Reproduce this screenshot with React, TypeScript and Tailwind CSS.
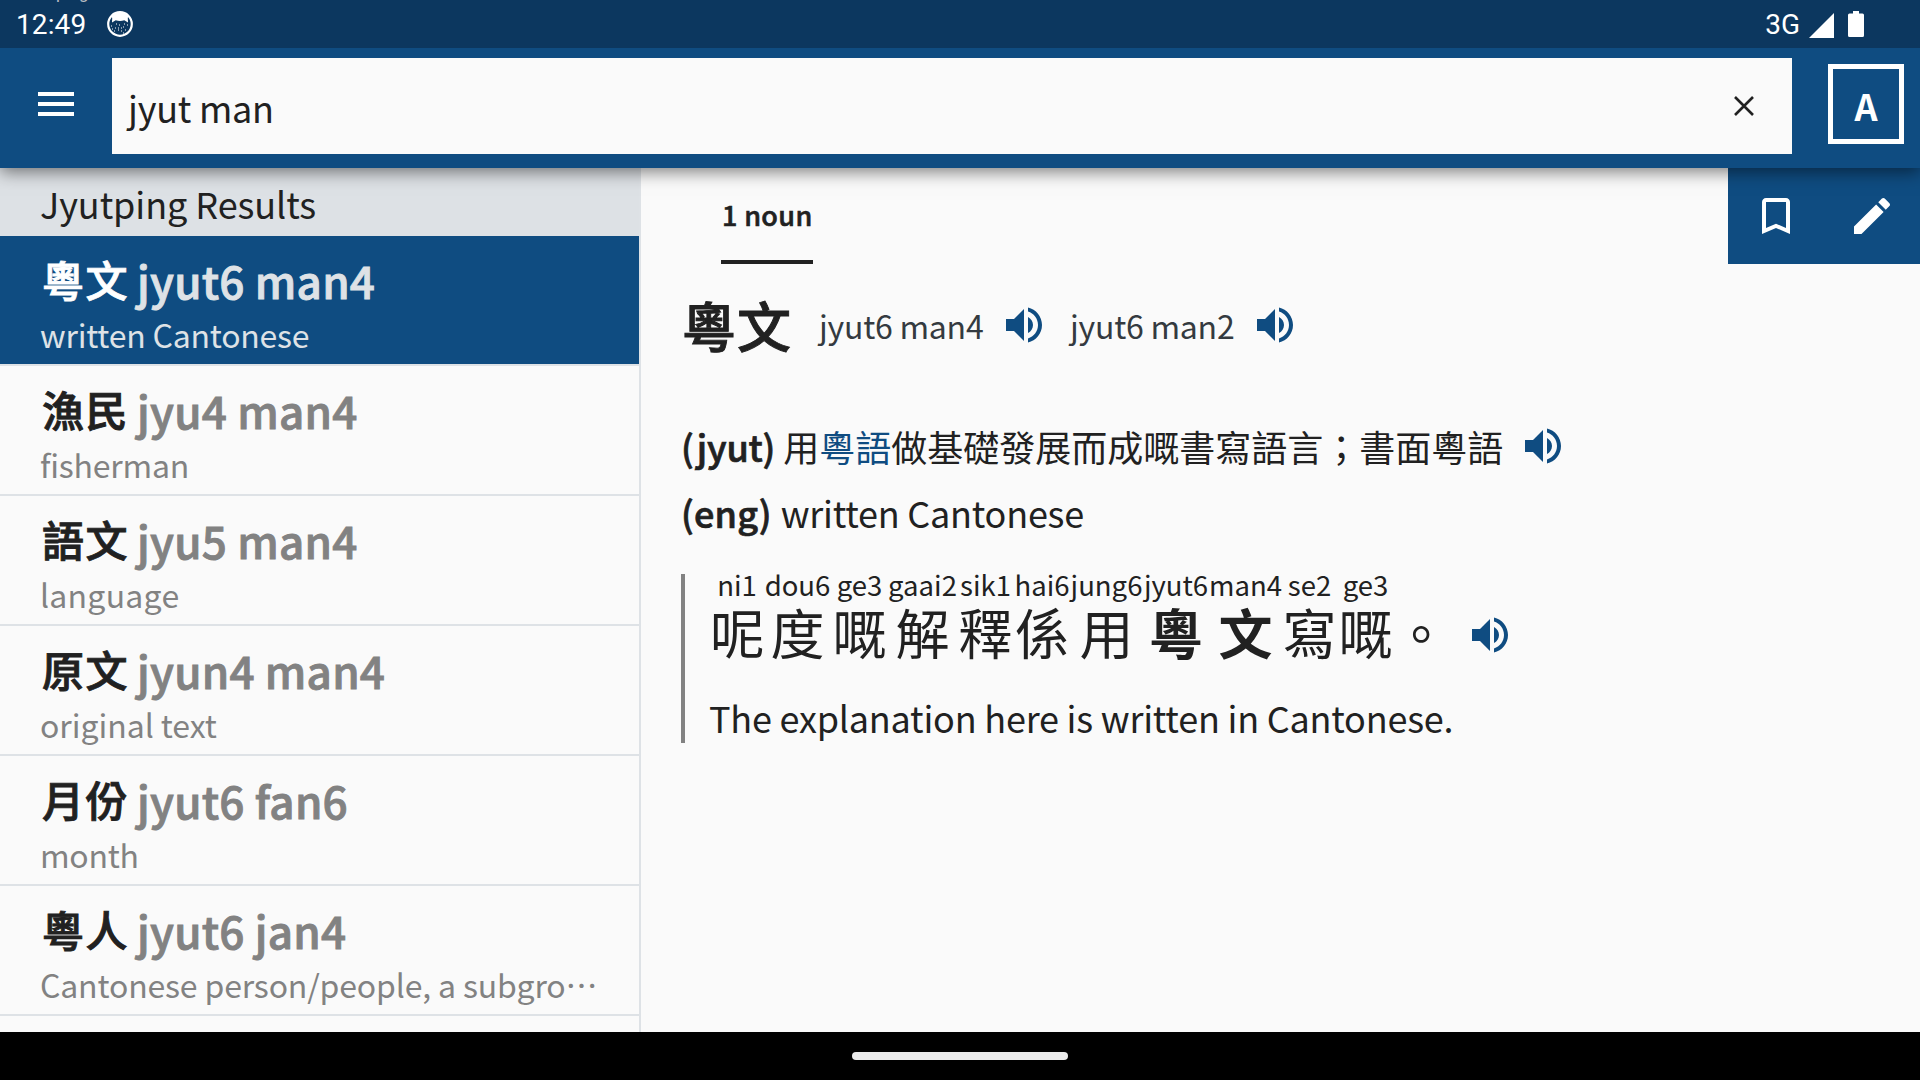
import React from "react";

const results = [
  { word: "粵文", jyutping: "jyut6 man4", meaning: "written Cantonese", tracking: "tracking-[-0.22px]", selected: true },
  { word: "漁民", jyutping: "jyu4 man4", meaning: "fisherman", tracking: "tracking-[-0.2px]" },
  { word: "語文", jyutping: "jyu5 man4", meaning: "language", tracking: "tracking-[0.25px]" },
  { word: "原文", jyutping: "jyun4 man4", meaning: "original text", tracking: "tracking-[-0.05px]" },
  { word: "月份", jyutping: "jyut6 fan6", meaning: "month", tracking: "tracking-[-0.3px]" },
  { word: "粵人", jyutping: "jyut6 jan4", meaning: "Cantonese person/people, a subgro⋯", tracking: "tracking-[-0.16px]" },
];

const ruby = [
  { base: "呢", reading: "ni1", width: "w-[54px]" },
  { base: "度", reading: "dou6", width: "w-[67px]" },
  { base: "嘅", reading: "ge3", width: "w-[57px]" },
  { base: "解", reading: "gaai2", width: "w-[69px]" },
  { base: "釋", reading: "sik1", width: "w-[57px]" },
  { base: "係", reading: "hai6", width: "w-[56px]" },
  { base: "用", reading: "jung6", width: "w-[73px]" },
  { base: "粵", reading: "jyut6", width: "w-[66px]", bold: true },
  { base: "文", reading: "man4", width: "w-[73px]", bold: true },
  { base: "寫", reading: "se2", width: "w-[55px]" },
  { base: "嘅", reading: "ge3", width: "w-[57px]" },
  { base: "。", reading: "", width: "w-[54px]" },
];

function Speaker({ className = "" }: { className?: string }) {
  return (
    <svg viewBox="0 0 24 24" className={`size-12 shrink-0 fill-[#0f4c81] ${className}`}>
      <path d="M3 9v6h4l5 5V4L7 9H3zm13.5 3c0-1.77-1.02-3.29-2.5-4.03v8.05c1.48-.73 2.5-2.25 2.5-4.02zM14 3.23v2.06c2.89.86 5 3.54 5 6.71s-2.11 5.85-5 6.71v2.06c4.01-.91 7-4.49 7-8.77s-2.99-7.86-7-8.77z" />
    </svg>
  );
}

function StatusBar() {
  return (
    <div className="relative z-20 flex h-12 shrink-0 items-center bg-[#0c375f] pt-[2px] pr-14 pl-4 font-['Roboto',sans-serif] text-[28px] text-white">
      <span className="absolute -top-[15px] left-14 text-[17px] leading-4 text-[#b9bec4]">ping</span>
      <span className="w-[91px] tracking-[0.1px]">12:49</span>
      <svg viewBox="0 0 26 26" className="-mt-[2px] size-[26px]">
        <circle cx="13" cy="13" r="11.8" fill="none" stroke="#fff" strokeWidth="2.2" />
        <path d="M4.500 4Q13-2 21.500 4L20.800 7L21 11.500L17.300 9.300Q13 10.500 8.700 9.300L5 11.500L5.200 7Z" fill="#fff" />
        <path
          d="M4 15h1M8 17h1M12 14h1M16 16h1M20 14h1M11 19h1M14 20h1M7 20h1M18 19h1M9 13h1M14 17h1M17 13h1M11 17h1M5 18h1M16 22h1"
          stroke="#fff"
          strokeWidth="1"
        />
      </svg>
      <span className="ml-auto">3G</span>
      <svg viewBox="0 0 25 25" className="ml-[9px] size-[25px] fill-white">
        <path d="M0 25L25 0V25Z" />
      </svg>
      <svg viewBox="0 0 16 26" className="-mt-[2px] ml-[14px] h-[26px] w-4 fill-white">
        <path d="M5 0h6v2.500h3.500A1.500 1.500 0 0 1 16 4v20.500a1.500 1.500 0 0 1-1.500 1.500h-13A1.500 1.500 0 0 1 0 24.500V4a1.500 1.500 0 0 1 1.500-1.500H5z" />
      </svg>
    </div>
  );
}

function SearchBar() {
  return (
    <header className="relative z-10 flex h-[120px] shrink-0 bg-[#0f4c81] pt-[10px] pr-4 shadow-[0_4px_16px_rgba(0,0,0,0.5)]">
      <button className="flex h-[92px] w-28 items-center justify-center">
        <span className="flex w-9 flex-col gap-[6px]">
          <span className="h-1 bg-white" />
          <span className="h-1 bg-white" />
          <span className="h-1 bg-white" />
        </span>
      </button>
      <div className="flex h-24 w-[1680px] items-center justify-between bg-[#fafafa] pr-[38px] pl-4">
        <span className="pt-px text-[36px] leading-[52px] tracking-[-0.24px] text-[#212121]">jyut man</span>
        <svg viewBox="0 0 20 20" className="size-5 stroke-[#212121]" fill="none" strokeWidth="2.6">
          <path d="M1 1L19 19M19 1L1 19" />
        </svg>
      </div>
      <button className="mt-[6px] ml-9 flex h-20 w-[76px] items-center justify-center border-[5px] border-white pt-[2px] text-[36px] leading-none font-bold text-white">
        A
      </button>
    </header>
  );
}

function ResultList() {
  return (
    <aside className="w-[641px] shrink-0 overflow-hidden border-r-2 border-[#dee2e6]">
      <h2 className="flex h-[68px] items-center bg-[#dde1e5] pt-[2px] pl-10 text-[36px] leading-[52px] tracking-[-0.08px] text-[#212121]">
        Jyutping Results
      </h2>
      {results.map((r) => (
        <div
          key={r.word}
          className={`h-[130px] border-b-2 border-[#dee2e6] pt-3 pl-10 ${r.selected ? "bg-[#0f4c81]" : ""}`}
        >
          <div
            className={`flex h-[64px] pl-[2px] text-[44px] leading-[64px] font-medium [-webkit-text-stroke-width:0.9px] ${r.selected ? "text-white" : "text-[#212121]"}`}
          >
            <span className="w-[88px] text-[42px] leading-[62px] tracking-[1.6px] whitespace-nowrap">{r.word}</span>
            <span className={`ml-[7px] tracking-[0.25px] ${r.selected ? "text-[#dee2e6]" : "text-[#828282]"}`}>
              {r.jyutping}
            </span>
          </div>
          <div
            className={`-mt-px text-[32px] leading-[46px] whitespace-nowrap ${r.tracking} ${r.selected ? "text-[#dee2e6]" : "text-[#828282]"}`}
          >
            {r.meaning}
          </div>
        </div>
      ))}
    </aside>
  );
}

function Entry() {
  return (
    <main className="flex grow flex-col text-[#212121]">
      <div className="flex h-24 items-start justify-between">
        <div className="ml-20 flex h-24 w-[92px] flex-col border-b-4 border-[#212121] pt-[27px]">
          <span className="pl-px text-[27px] leading-10 font-medium tracking-[0.35px] whitespace-nowrap [-webkit-text-stroke-width:0.6px]">
            1 noun
          </span>
        </div>
        <div className="flex h-24 w-48 items-center bg-[#0f4c81]">
          <svg viewBox="0 0 24 24" className="ml-6 size-12 fill-white">
            <path d="M17 3H7c-1.100 0-1.990.9-1.990 2L5 21l7-3 7 3V5c0-1.100-.9-2-2-2zm0 15l-5-2.180L7 18V5h10v13z" />
          </svg>
          <svg viewBox="0 0 24 24" className="ml-12 size-12 fill-white">
            <path d="M3 17.250V21h3.750L17.810 9.940l-3.750-3.750L3 17.250zM20.710 7.040c.39-.39.39-1.020 0-1.410l-2.340-2.340c-.39-.39-1.020-.39-1.410 0l-1.830 1.830 3.750 3.750 1.830-1.830z" />
          </svg>
        </div>
      </div>

      <div className="mt-[21px] flex h-20 items-center pl-[41px]">
        <h1 className="text-[54px] leading-[80px] font-medium tracking-[1px] [-webkit-text-stroke-width:0.9px]">粵文</h1>
        <span className="ml-[27px] w-[165px] text-[32px] leading-[46px] tracking-[-0.24px] whitespace-nowrap text-[#343a40]">
          jyut6 man4
        </span>
        <Speaker className="ml-4" />
        <span className="ml-[22px] w-[165px] text-[32px] leading-[46px] tracking-[-0.24px] whitespace-nowrap text-[#343a40]">
          jyut6 man2
        </span>
        <Speaker className="ml-4" />
      </div>

      <div className="mt-[48px] flex h-[66px] items-center pl-10 text-[36px]">
        <span className="font-medium tracking-[-0.2px] [-webkit-text-stroke-width:0.7px]">(jyut)</span>
        <span className="ml-2">
          用<span className="text-[#0f4c81]">粵語</span>做基礎發展而成嘅書寫語言；書面粵語
        </span>
        <Speaker className="ml-4" />
      </div>
      <div className="flex h-[66px] items-center pl-10 text-[36px]">
        <span className="font-medium tracking-[0.2px] [-webkit-text-stroke-width:0.7px]">(eng)</span>
        <span className="ml-[9px] tracking-[-0.24px]">written Cantonese</span>
      </div>

      <div className="mt-[29px] ml-10 h-[169px] border-l-4 border-[#828282] pl-[24px]">
        <div className="-mt-1 flex pl-px">
          {ruby.map((r, i) => (
            <span key={i} className={`flex flex-col items-center whitespace-nowrap ${r.width}`}>
              <span className="h-[26px] text-[27.5px] leading-[28px]">{r.reading}</span>
              <span className={`text-[54px] leading-[72px] ${r.bold ? "font-bold" : ""}`}>{r.base}</span>
            </span>
          ))}
          <Speaker className="mt-[41px] ml-[18px]" />
        </div>
        <p className="mt-[23px] text-[36px] leading-[52px] tracking-[-0.22px]">
          The explanation here is written in Cantonese.
        </p>
      </div>
    </main>
  );
}

export default function App() {
  return (
    <div
      lang="zh-Hant"
      className="flex h-[1080px] w-[1920px] flex-col overflow-hidden bg-[#fafafa] font-['Noto_Sans_CJK_TC',sans-serif]"
    >
      <StatusBar />
      <SearchBar />
      <div className="flex h-[864px] shrink-0 overflow-hidden">
        <ResultList />
        <Entry />
      </div>
      <div className="flex h-12 shrink-0 items-center justify-center bg-black">
        <div className="h-2 w-[216px] rounded-full bg-[#ebebeb]" />
      </div>
    </div>
  );
}
